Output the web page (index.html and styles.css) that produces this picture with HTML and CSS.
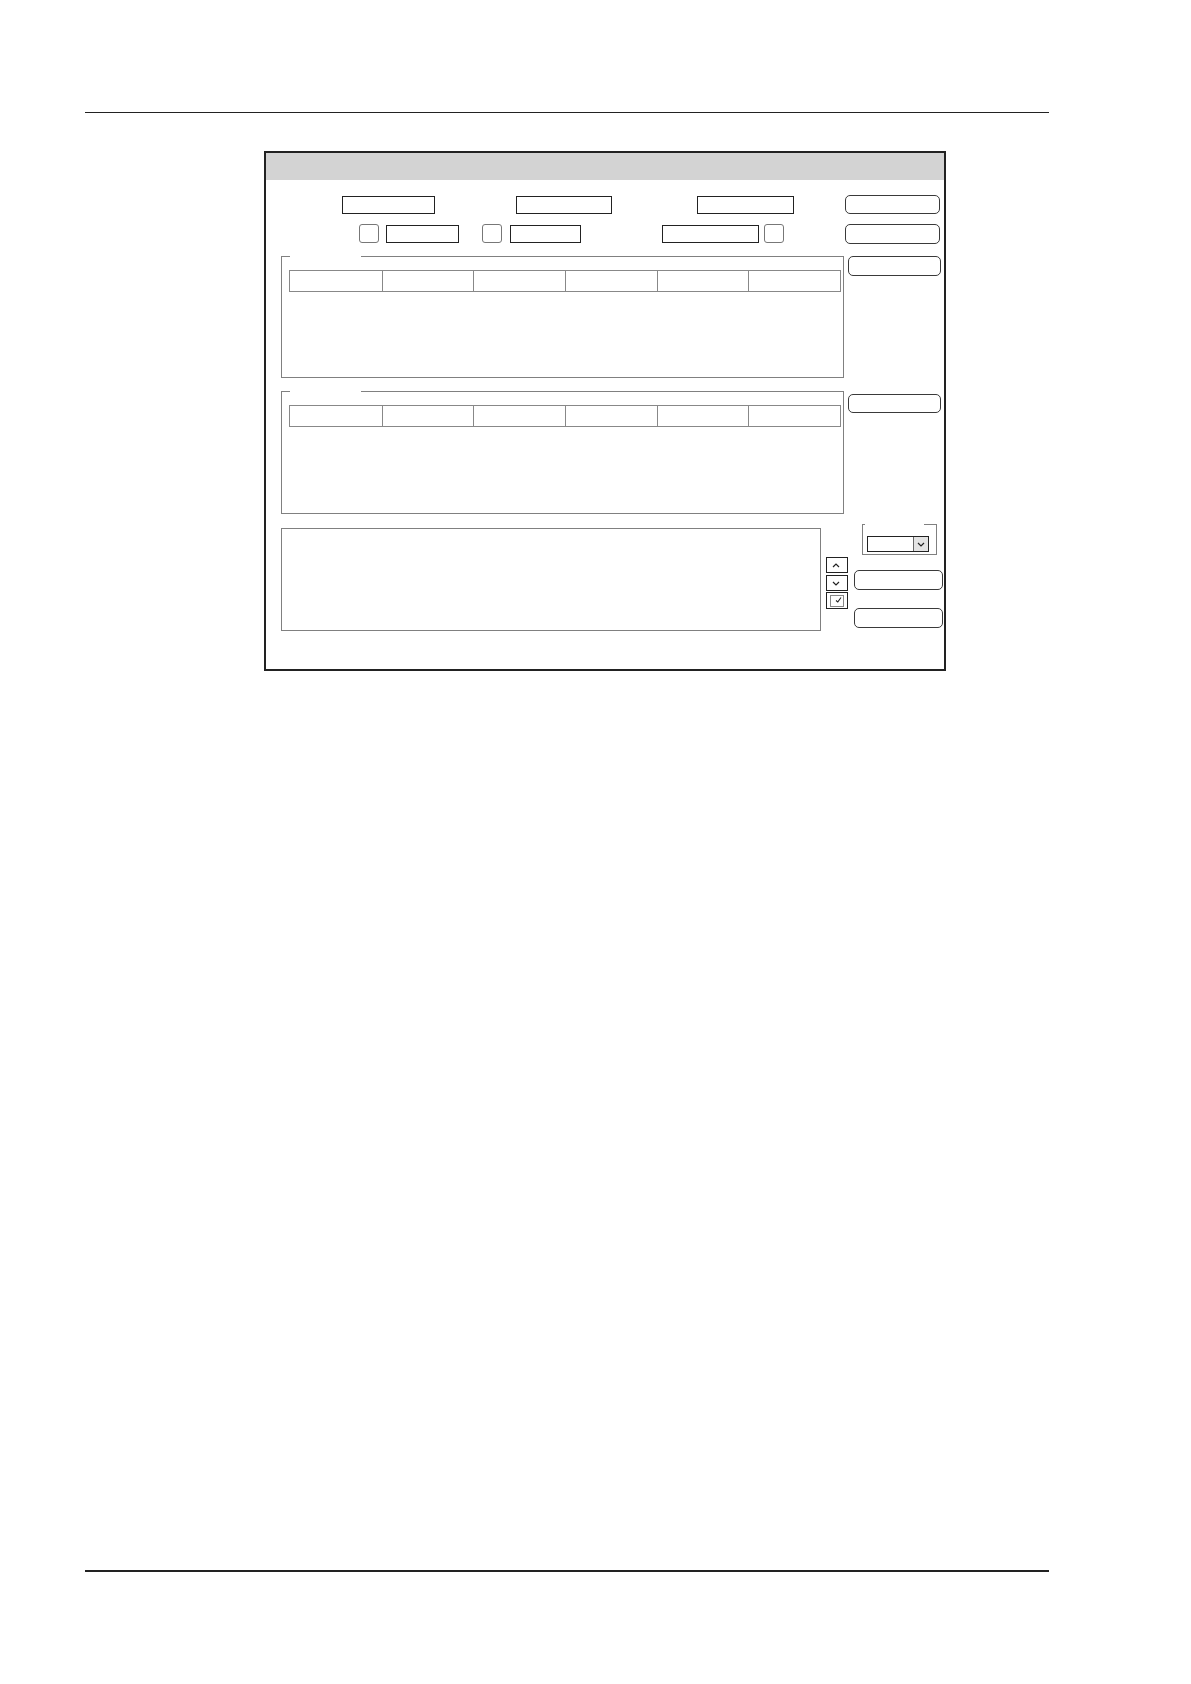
FILE: index.html
```html
<!DOCTYPE html>
<html>
<head>
<meta charset="utf-8">
<link rel="stylesheet" href="styles.css">
</head>
<body>
<div class="page">
  <div class="rule-top"></div>
  <div class="window">
    <div class="titlebar"></div>
    <div class="row row1">
      <div class="input w93"></div>
      <div class="input w96 ml81"></div>
      <div class="input w97 ml85"></div>
      <div class="btn w95 ml51"></div>
    </div>
    <div class="row row2">
      <div class="cb"></div>
      <div class="input w73 ml7"></div>
      <div class="cb ml23"></div>
      <div class="input w71 ml8"></div>
      <div class="input w97 ml81"></div>
      <div class="cb ml5"></div>
      <div class="btn w95 ml61"></div>
    </div>
    <div class="main">
      <div class="section s1">
        <div class="group g1">
          <div class="grid-head"><div></div><div></div><div></div><div></div><div></div><div></div></div>
        </div>
        <div class="btn side"></div>
      </div>
      <div class="section s2">
        <div class="group g2">
          <div class="grid-head"><div></div><div></div><div></div><div></div><div></div><div></div></div>
        </div>
        <div class="btn side side2"></div>
      </div>
      <div class="section s3">
        <div class="textbox"></div>
        <div class="arrows">
          <div class="abtn up"><svg width="8" height="5" viewBox="0 0 8 5"><path d="M1 4 L4 1 L7 4" fill="none" stroke="#222" stroke-width="1.2"/></svg></div>
          <div class="abtn down"><svg width="8" height="5" viewBox="0 0 8 5"><path d="M1 1 L4 4 L7 1" fill="none" stroke="#222" stroke-width="1.2"/></svg></div>
          <div class="abtn check"><div class="checkbox-inner"><svg width="7" height="6" viewBox="0 0 7 6"><path d="M1 3.5 L2.8 5 L6 0.5" fill="none" stroke="#222" stroke-width="1.1"/></svg></div></div>
        </div>
        <div class="rightcol">
          <div class="smallgroup">
            <div class="combo"><div class="combo-field"></div><div class="combo-drop"><svg width="8" height="5" viewBox="0 0 8 5"><path d="M1 1 L4 4 L7 1" fill="none" stroke="#222" stroke-width="1.2"/></svg></div></div>
          </div>
          <div class="btn wide b5"></div>
          <div class="btn wide b6"></div>
        </div>
      </div>
    </div>
  </div>
  <div class="rule-bottom"></div>
</div>
</body>
</html>
```

FILE: styles.css
```css
* { box-sizing: border-box; }
html, body { margin: 0; padding: 0; background: #fff; font-family: "Liberation Sans", Arial, sans-serif; }
.page { width: 1191px; height: 1684px; padding-top: 112px; overflow: hidden; }
.rule-top { margin-left: 85px; width: 964px; height: 1px; background: #222; }
.rule-bottom { margin: 899px 0 0 85px; width: 964px; height: 2px; background: #222; }

.window { margin: 38px 0 0 264px; width: 682px; height: 520px; border: 2px solid #222; }
.titlebar { height: 27px; background: #d3d3d3; }

.row { display: flex; }
.row1 { margin-top: 15px; height: 19px; padding-left: 76px; align-items: flex-end; }
.row2 { margin-top: 10px; height: 20px; padding-left: 93px; align-items: flex-start; }

.input { height: 18px; border: 1px solid #222; background: #fff; }
.row2 .input { margin-top: 1px; }
.cb { width: 20px; height: 19px; border: 1.5px solid #777; border-radius: 3px; background: #fff; }
.btn { height: 19px; border: 1.5px solid #3a3a3a; border-radius: 5px; background: #fff; }
.row2 .btn { height: 20px; }

.w93 { width: 93px; } .w96 { width: 96px; } .w97 { width: 97px; } .w95 { width: 95px; }
.w73 { width: 73px; } .w71 { width: 71px; }
.ml5 { margin-left: 5px; } .ml7 { margin-left: 7px; } .ml8 { margin-left: 8px; }
.ml23 { margin-left: 23px; } .ml51 { margin-left: 51px; } .ml61 { margin-left: 61px; }
.ml81 { margin-left: 81px; } .ml85 { margin-left: 85px; }

.main { padding-left: 15px; }
.section { display: flex; align-items: flex-start; }
.s1 { margin-top: 12px; }
.s2 { margin-top: 13px; }
.s3 { margin-top: 10px; }

.group { position: relative; width: 563px; border: 1px solid #808080; padding: 13px 2px 0 7px; }
.group::before { content: ""; position: absolute; left: 8px; top: -1px; width: 71px; height: 1px; background: #fff; }
.g1 { height: 122px; }
.g2 { height: 123px; }
.grid-head { display: grid; grid-template-columns: repeat(6, 1fr); width: 552px; height: 22px; border: 1px solid #888; }
.grid-head div + div { border-left: 1px solid #888; }

.side { width: 93px; height: 20px; margin-left: 4px; }
.side2 { height: 19px; margin-top: 3px; }

.textbox { width: 540px; height: 103px; margin-top: 4px; border: 1px solid #808080; }
.arrows { width: 22px; margin-left: 5px; margin-top: 33px; display: flex; flex-direction: column; }
.abtn { width: 22px; height: 16px; border: 1px solid #222; display: flex; align-items: center; padding-left: 5px; }
.abtn.down { margin-top: 2px; }
.abtn.check { margin-top: 1px; height: 17px; padding-left: 3px; }
.checkbox-inner { width: 14px; height: 12px; border: 1px solid #888; display: flex; justify-content: flex-end; align-items: flex-start; padding: 1px 1px 0 0; }

.rightcol { width: 89px; margin-left: 6px; display: flex; flex-direction: column; }
.smallgroup { position: relative; margin-left: 8px; width: 75px; height: 31px; border: 1px solid #808080; padding: 11px 0 0 4px; }
.smallgroup::before { content: ""; position: absolute; left: 2px; top: -1px; width: 59px; height: 1px; background: #fff; }
.combo { display: flex; width: 62px; height: 16px; border: 1px solid #222; }
.combo-field { flex: 1; }
.combo-drop { width: 15px; background: #e3e3e3; border-left: 1px solid #666; display: flex; align-items: center; justify-content: center; }
.wide { width: 89px; height: 20px; }
.b5 { margin-top: 15px; }
.b6 { margin-top: 18px; }
```
